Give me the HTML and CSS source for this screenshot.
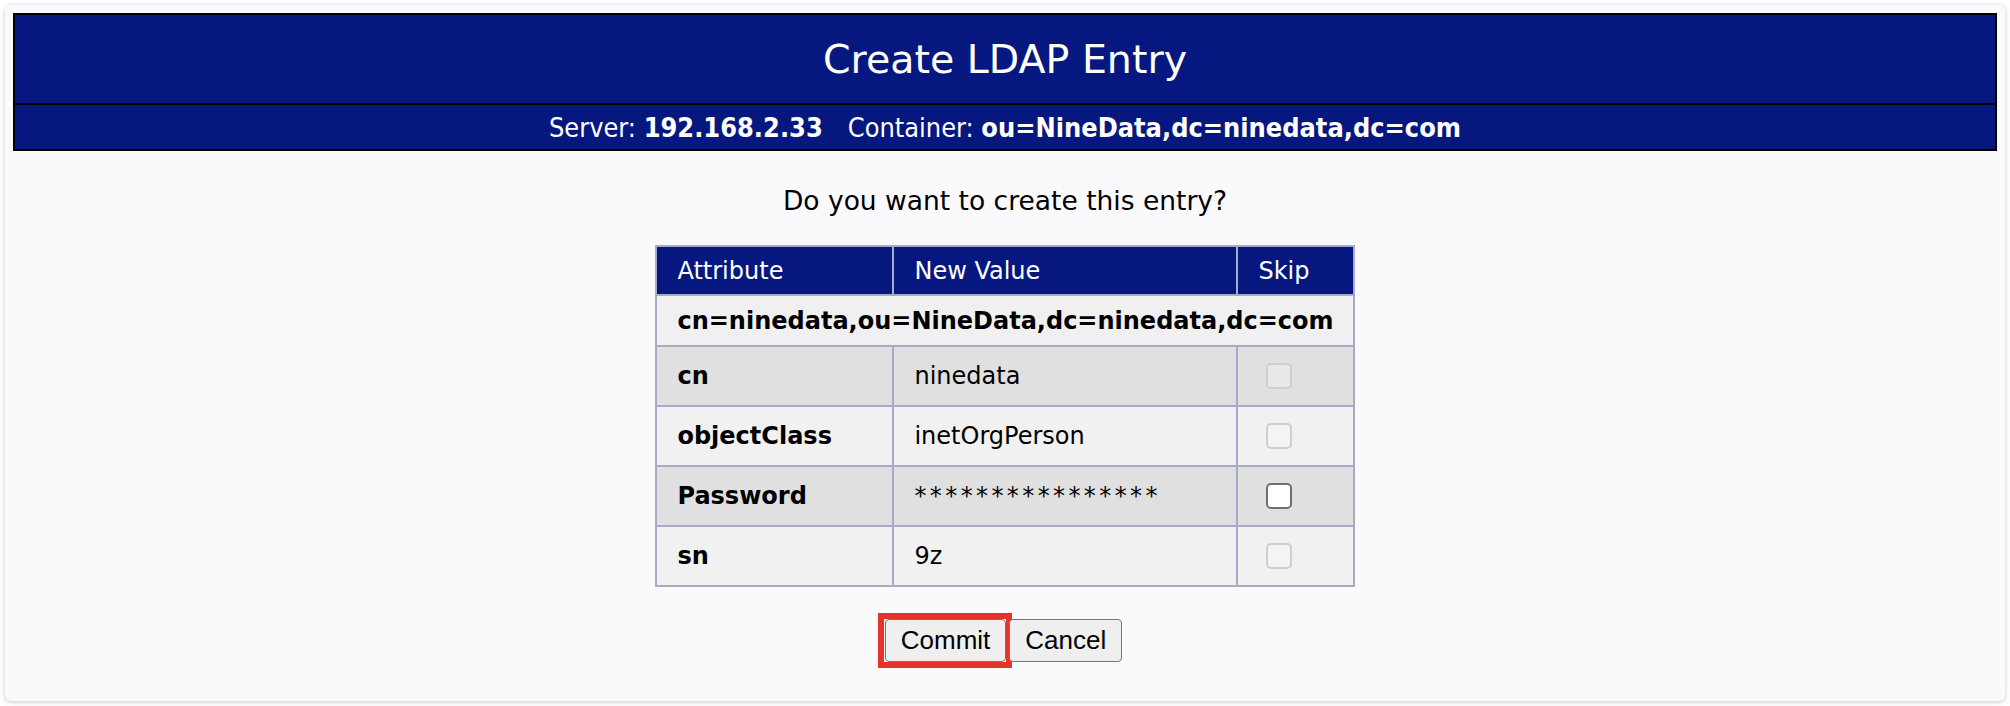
FILE: index.html
```html
<!DOCTYPE html>
<html lang="en">

<head>
    <meta charset="UTF-8">
    <meta name="viewport" content="width=device-width, initial-scale=1.0">
    <title>Create LDAP Entry</title>
    <link rel="stylesheet" href="styles.css">
</head>

<body>

    <div class="page">
        <div class="head">
            <h1 class="head__title">Create LDAP Entry</h1>
            <div class="head__sub">
                <span>Server: <b>192.168.2.33</b></span>
                <span>Container: <b>ou=NineData,dc=ninedata,dc=com</b></span>
            </div>
        </div>

        <div class="confirm">
            <p class="confirm__question">Do you want to create this entry?</p>

            <table class="entry">
                <colgroup>
                    <col class="entry__col-attr">
                    <col class="entry__col-value">
                    <col class="entry__col-skip">
                </colgroup>
                <thead>
                    <tr>
                        <th>Attribute</th>
                        <th>New Value</th>
                        <th>Skip</th>
                    </tr>
                </thead>
                <tbody>
                    <tr class="entry__dn">
                        <td colspan="3">cn=ninedata,ou=NineData,dc=ninedata,dc=com</td>
                    </tr>
                    <tr class="entry__row entry__row--dark">
                        <td class="entry__attr">cn</td>
                        <td>ninedata</td>
                        <td><input type="checkbox" class="entry__skip" disabled></td>
                    </tr>
                    <tr class="entry__row">
                        <td class="entry__attr">objectClass</td>
                        <td>inetOrgPerson</td>
                        <td><input type="checkbox" class="entry__skip" disabled></td>
                    </tr>
                    <tr class="entry__row entry__row--dark">
                        <td class="entry__attr">Password</td>
                        <td class="entry__secret">****************</td>
                        <td><input type="checkbox" class="entry__skip" name="skip_password"></td>
                    </tr>
                    <tr class="entry__row">
                        <td class="entry__attr">sn</td>
                        <td>9z</td>
                        <td><input type="checkbox" class="entry__skip" disabled></td>
                    </tr>
                </tbody>
            </table>

            <form class="confirm__actions" onsubmit="return false">
                <span class="mark">
                    <button type="submit" class="btn">Commit</button>
                </span>
                <button type="button" class="btn btn--cancel">Cancel</button>
            </form>
        </div>
    </div>

</body>

</html>
```

FILE: styles.css
```css
html {
    box-sizing: border-box;
    background: #fff;
}

*,
*:before,
*:after {
    box-sizing: inherit;
}

body {
    margin: 0;
    font-family: "DejaVu Sans", Verdana, sans-serif;
    color: #000;
}

.page {
    margin: 5px;
    height: 696px;
    padding: 8px;
    background: #fafafc;
    border-radius: 6px;
    box-shadow: 0 1px 5px rgba(0, 0, 0, 0.22);
}

/* title block */
.head {
    border: 2px solid #000;
    background: #061880;
    color: #fff;
}

.head__title {
    margin: 0;
    height: 88px;
    display: flex;
    align-items: center;
    justify-content: center;
    font-size: 39.5px;
    font-weight: normal;
}

.head__sub {
    height: 46px;
    border-top: 2px solid #000;
    display: flex;
    align-items: center;
    justify-content: center;
    gap: 25px;
    font-family: "DejaVu Sans Condensed", "DejaVu Sans", sans-serif;
    font-size: 26.9px;
}

/* confirmation */
.confirm {
    display: flex;
    flex-direction: column;
    align-items: center;
}

.confirm__question {
    margin: 35px 0 29px;
    font-size: 26.5px;
    line-height: 30px;
}

.entry {
    width: 692px;
    border-collapse: collapse;
    border: 2px solid #a9a9cc;
    font-size: 24px;
}

.entry__col-attr {
    width: 237px;
}

.entry__col-value {
    width: 344px;
}

.entry th,
.entry td {
    border: 2px solid #a9a9cc;
    padding: 0 20px;
    text-align: left;
    white-space: nowrap;
}

.entry th {
    height: 49px;
    background: #061880;
    color: #fff;
    font-weight: normal;
}

.entry__dn td {
    height: 51px;
    padding: 0 19px 0 20px;
    background: #f0f0f0;
    font-weight: bold;
}

.entry__row td {
    height: 60px;
    background: #f1f1f1;
}

.entry__row--dark td {
    background: #e0e0e0;
}

.entry__row .entry__attr {
    font-weight: bold;
}

.entry__secret {
    padding-bottom: 8px;
    letter-spacing: 3.4px;
}

.entry__skip {
    appearance: none;
    -webkit-appearance: none;
    display: block;
    width: 26px;
    height: 26px;
    margin: 0 0 0 8px;
    border: 2px solid #6f6f6f;
    border-radius: 5px;
    background: #fff;
}

.entry__skip:disabled {
    border-color: #cfcfcf;
    background: rgba(255, 255, 255, 0.25);
}

.confirm__actions {
    display: flex;
    align-items: center;
    margin: 26px 10px 0 0;
}

/* red frame drawn round the Commit button */
.mark {
    display: flex;
    padding: 0 0 0 1px;
    border: 6px solid #e5352a;
}

.btn {
    height: 43px;
    padding: 0 15px;
    border: 1px solid #767676;
    border-radius: 4px;
    background: #efefef;
    font-family: "Liberation Sans", Arial, sans-serif;
    font-size: 26px;
    color: #000;
}

.btn--cancel {
    position: relative;
    margin-left: -3px;
}
```
